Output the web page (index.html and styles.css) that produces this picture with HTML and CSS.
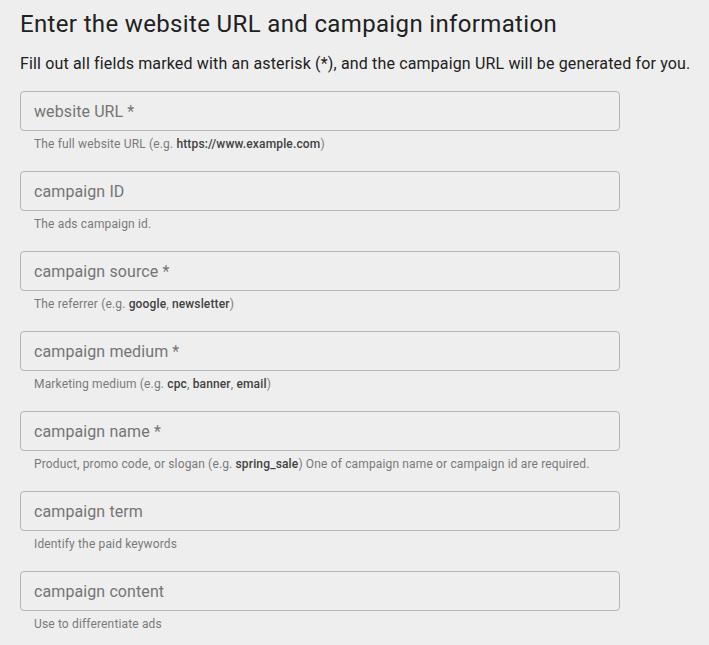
FILE: index.html
```html
<!DOCTYPE html>
<html lang="en">
<head>
<meta charset="utf-8">
<title>Campaign URL Builder</title>
<link rel="stylesheet" href="styles.css">
</head>
<body>
<main class="page">
  <h1 class="title">Enter the website URL and campaign information</h1>
  <p class="intro">Fill out all fields marked with an asterisk (*), and the campaign URL will be generated for you.</p>
  <div class="fields">
    <div class="field">
      <div class="box"><span class="ph">website URL *</span></div>
      <div class="help">The full website URL (e.g. <b>https://www.example.com</b>)</div>
    </div>
    <div class="field">
      <div class="box"><span class="ph">campaign ID</span></div>
      <div class="help">The ads campaign id.</div>
    </div>
    <div class="field">
      <div class="box"><span class="ph">campaign source *</span></div>
      <div class="help">The referrer (e.g. <b>google</b>, <b>newsletter</b>)</div>
    </div>
    <div class="field">
      <div class="box"><span class="ph">campaign medium *</span></div>
      <div class="help">Marketing medium (e.g. <b>cpc</b>, <b>banner</b>, <b>email</b>)</div>
    </div>
    <div class="field">
      <div class="box"><span class="ph">campaign name *</span></div>
      <div class="help">Product, promo code, or slogan (e.g. <b>spring_sale</b>) One of campaign name or campaign id are required.</div>
    </div>
    <div class="field">
      <div class="box"><span class="ph">campaign term</span></div>
      <div class="help">Identify the paid keywords</div>
    </div>
    <div class="field">
      <div class="box"><span class="ph">campaign content</span></div>
      <div class="help">Use to differentiate ads</div>
    </div>
  </div>
</main>
</body>
</html>
```

FILE: styles.css
```css
html, body {
  margin: 0;
  padding: 0;
  background: #eeeeee;
}
body {
  font-family: Roboto, "Noto Sans", sans-serif;
  color: #212121;
}
.page {
  padding: 8px 0 0 20px;
}
.title {
  margin: 0;
  font-size: 24px;
  font-weight: 400;
  line-height: 32px;
  letter-spacing: 0.35px;
  color: #212121;
  white-space: nowrap;
}
.intro {
  margin: 14px 0 0 0;
  font-size: 16px;
  line-height: 20px;
  letter-spacing: 0.15px;
  color: #212121;
  white-space: nowrap;
}
.fields {
  margin-top: 17px;
  display: flex;
  flex-direction: column;
}
.field {
  height: 80px;
}
.box {
  box-sizing: border-box;
  width: 600px;
  height: 40px;
  border: 1px solid #b5b5b5;
  border-radius: 4px;
  padding: 0 13px;
  display: flex;
  align-items: center;
}
.ph {
  font-size: 16px;
  letter-spacing: 0.1px;
  color: #757575;
}
.help {
  margin-top: 5px;
  padding-left: 14px;
  font-size: 12px;
  line-height: 16px;
  letter-spacing: 0.15px;
  color: #7a7a7a;
  white-space: nowrap;
}
.help b {
  font-weight: 500;
  color: #424242;
}
```
